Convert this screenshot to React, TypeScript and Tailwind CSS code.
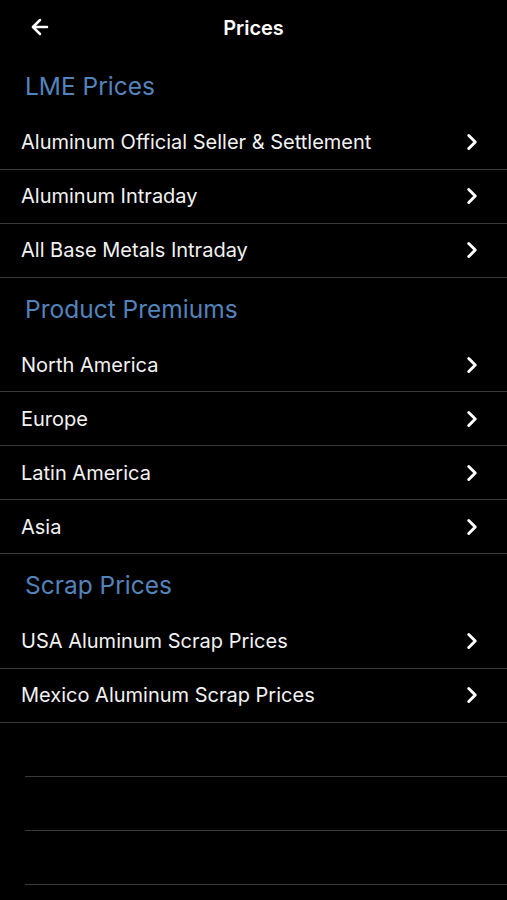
import { ArrowLeft, ChevronRight } from "lucide-react";

type Section = {
  title: string;
  items: string[];
};

const sections: Section[] = [
  {
    title: "LME Prices",
    items: [
      "Aluminum Official Seller & Settlement",
      "Aluminum Intraday",
      "All Base Metals Intraday",
    ],
  },
  {
    title: "Product Premiums",
    items: ["North America", "Europe", "Latin America", "Asia"],
  },
  {
    title: "Scrap Prices",
    items: ["USA Aluminum Scrap Prices", "Mexico Aluminum Scrap Prices"],
  },
];

function Row({ label }: { label: string }) {
  return (
    <div className="flex h-[54px] items-center justify-between border-b border-[#3a3a3c] pl-[21px] pr-[22px]">
      <span className="text-[20px] text-[#f2f2f2]">{label}</span>
      <ChevronRight className="h-[26px] w-[26px] text-white" strokeWidth={2.75} />
    </div>
  );
}

export default function App() {
  return (
    <div
      className="min-h-[900px] bg-black text-white"
      style={{ fontFamily: "Inter, 'Noto Sans', sans-serif" }}
    >
      <header className="relative flex h-[55px] items-center justify-center">
        <button className="absolute left-[28px] top-[15px] text-white">
          <ArrowLeft className="h-[24px] w-[24px]" strokeWidth={2.5} />
        </button>
        <h1 className="text-[20px] font-semibold">Prices</h1>
      </header>

      {sections.map((section) => (
        <section key={section.title}>
          <div className="flex h-[60.5px] items-center pl-[25px] pt-[3px] text-[24.5px] text-[#5383bb]">
            {section.title}
          </div>
          {section.items.map((item) => (
            <Row key={item} label={item} />
          ))}
        </section>
      ))}

      <div className="pl-[25px]">
        <div className="h-[54px] border-b border-[#3a3a3c]" />
        <div className="h-[54px] border-b border-[#3a3a3c]" />
        <div className="h-[54px] border-b border-[#3a3a3c]" />
      </div>
    </div>
  );
}
